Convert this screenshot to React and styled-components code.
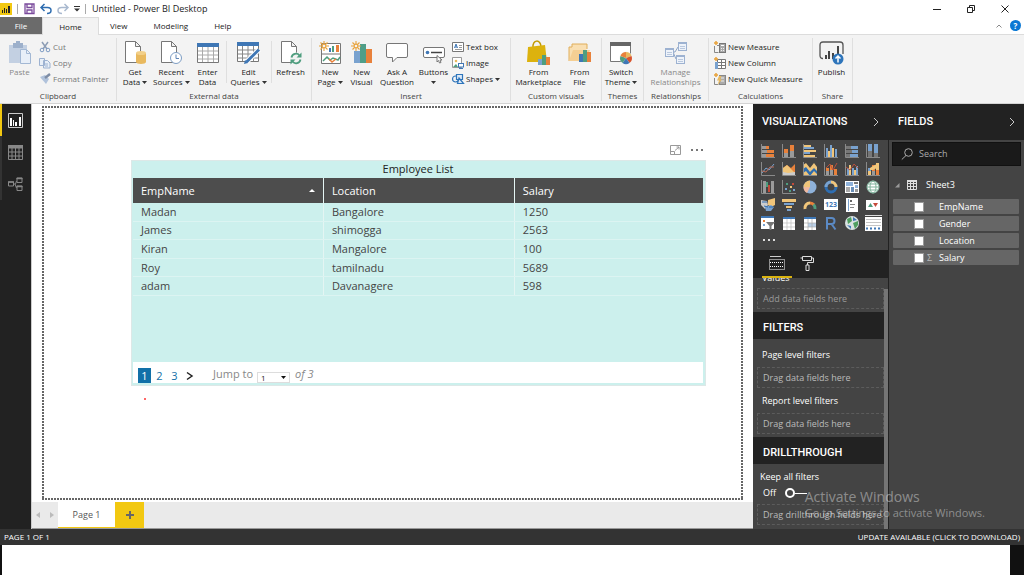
import React, { useState } from "react";
import styled, { createGlobalStyle } from "styled-components";

const GlobalStyle = createGlobalStyle`
  *, *::before, *::after { box-sizing: border-box; }
  body {
    margin: 0;
    background: #fff;
    font-family: "Open Sans", "Noto Sans", sans-serif;
    font-size: 8px;
    line-height: 10px;
    color: #222;
  }
  button, input, select {
    font: inherit;
    color: inherit;
    margin: 0;
    padding: 0;
    border: 0;
    background: none;
  }
`;

// small helper, draws a list of [x, y, w, h, fill]
const Bars = ({ list }) =>
  list.map(([x, y, w, h, fill], i) => (
    <rect key={i} x={x} y={y} width={w} height={h} fill={fill} />
  ));

const Icon = ({ w = 14, h, box, children }) => (
  <Svg width={w} height={h || w} viewBox={box || `0 0 ${w} ${h || w}`} fill="none" aria-hidden="true">
    {children}
  </Svg>
);

const Caret = () => (
  <Icon w={5} h={3}><path d="M0 0h5L2.5 3z" fill="#333" /></Icon>
);

const Spark = () => (
  <g stroke="#e8a33d" strokeWidth="1.1">
    <path d="M5 0v10M0 5h10M1.5 1.5l7 7M8.500 1.500l-7 7" />
    <circle cx="5" cy="5" r="1.900" fill="#f3f3f3" />
  </g>
);

const doc = <path d="M1.500.5h10l5 5v16h-15zM11.500.5v5h5" fill="#fff" stroke="#777" />;

const art = {
  paste: (
    <Icon w={22} h={24}>
      <path d="M0 4h18v18H0z" fill="#c3d0e2" />
      <path d="M4 2h3V0h4v2h3v5H4z" fill="#9db0cb" />
      <path d="M11.500 8.500h6l4 4v10h-10z" fill="#e8eff8" stroke="#a3b8d4" />
      <path d="M17.500 8.500v4h4" stroke="#a3b8d4" />
    </Icon>
  ),
  getData: (
    <Icon w={22} h={24}>
      {doc}
      <path d="M12 12v9c0 2.500 10 2.500 10 0v-9z" fill="#e9b95e" />
      <ellipse cx="17" cy="12" rx="5" ry="2" fill="#f2cf88" />
    </Icon>
  ),
  recent: (
    <Icon w={22} h={24}>
      {doc}
      <circle cx="16" cy="17" r="5.500" fill="#fff" stroke="#7d9dc4" />
      <path d="M16 13.500v4h3" stroke="#5f84b5" />
    </Icon>
  ),
  enter: (
    <Icon w={22} h={22}>
      <path d="M.5 1.500h21v19H.5z" fill="#fff" stroke="#777" />
      <path d="M0 1h22v4H0z" fill="#3f77b5" />
      <path d="M5.500 5v15M11 5v15M16.500 5v15M1 9h20M1 13h20M1 17h20" stroke="#aaa" />
    </Icon>
  ),
  edit: (
    <Icon w={23} h={24}>
      <path d="M.5 1.500h21v19H.5z" fill="#fff" stroke="#777" />
      <path d="M0 1h22v4H0z" fill="#3f77b5" />
      <path d="M5.500 5v15M11 5v15M16.500 5v15M1 9h20M1 13h20M1 17h20" stroke="#888" />
      <path d="M22 8.500L9.500 21" stroke="#fff" strokeWidth="5" />
      <path d="M22 8.500L9.500 21" stroke="#3f77b5" strokeWidth="3" />
      <path d="M8 19l3 3-4 1z" fill="#3f77b5" />
    </Icon>
  ),
  refresh: (
    <Icon w={22} h={24}>
      {doc}
      <circle cx="16" cy="17.500" r="6" fill="#f3f3f3" />
      <path d="M11.500 16.500a4.500 4.500 0 0 1 8-2M20.500 18.500a4.500 4.500 0 0 1-8 2" stroke="#4f9e7f" strokeWidth="1.800" />
      <path d="M21.500 11.500v5h-5zM10.500 23.500v-5h5z" fill="#4f9e7f" />
    </Icon>
  ),
  newPage: (
    <Icon w={23} h={24}>
      <path d="M2.500 2.500h19v20h-19zM2 13h20" fill="#fff" stroke="#777" />
      <Bars list={[[10, 7, 2, 4, "#3f77b5"], [13, 5, 2, 6, "#4f9e7f"], [17, 4, 3, 7, "#e8813b"]]} />
      <path d="M4 20l4-4 3 3 3-2 5 2 2-3" stroke="#4f9e7f" strokeWidth="1.500" />
      <path d="M10 18l3 3 4-3" stroke="#e8813b" strokeWidth="1.500" />
      <Spark />
    </Icon>
  ),
  newVisual: (
    <Icon w={22} h={24}>
      <Bars list={[[3, 10, 6, 12, "#79a2cf"], [9, 3, 6, 19, "#4f9e88"], [15, 8, 6, 14, "#e8813b"]]} />
      <Spark />
    </Icon>
  ),
  ask: (
    <Icon w={22} h={24}>
      <path d="M2 2.500h18q1.500 0 1.500 1.500v11q0 1.500-1.500 1.500h-9L6.500 21v-4.500H2Q.5 16.500.5 15V4Q.5 2.500 2 2.500z" fill="#fff" stroke="#777" />
    </Icon>
  ),
  buttons: (
    <Icon w={22} h={24}>
      <rect x=".5" y="6.500" width="21" height="10" rx="1.500" fill="#fff" stroke="#777" />
      <circle cx="4.500" cy="11.500" r="1.800" fill="#3f77b5" />
      <path d="M8 11.500h11" stroke="#444" strokeWidth="1.500" />
      <path d="M14 14.500l5 4.500h-2l1 2.500-1.500.5-1-2.500-1.500 1.500z" fill="#fff" stroke="#777" />
    </Icon>
  ),
  market: (
    <Icon w={23} h={26}>
      <path d="M6 8C5-1 14-1 14 7" stroke="#c29a00" strokeWidth="1.500" />
      <path d="M1 7l17-2 2 17H0z" fill="#dcb20e" />
      <Bars list={[[11, 19, 4, 6, "#79a2cf"], [15, 15, 4, 10, "#4f9e7f"], [19, 17, 4, 8, "#e8813b"]]} />
    </Icon>
  ),
  file: (
    <Icon w={23} h={24}>
      <path d="M1 20V6h3V3h15v5" fill="#f9dfb2" stroke="#e0ae5b" />
      <path d="M1 20L5 9h17l-4 11z" fill="#f5cf93" />
      <Bars list={[[11, 13, 4, 8, "#3f77b5"], [15, 9, 4, 12, "#4f9e7f"], [19, 11, 4, 10, "#e8813b"]]} />
    </Icon>
  ),
  theme: (
    <Icon w={24} h={24}>
      <path d="M1.500 1.500h20v19h-20z" fill="#fff" stroke="#777" />
      <path d="M1 1h21v4H1z" fill="#666" />
      <circle cx="17" cy="17" r="6.500" fill="#f3f3f3" />
      <path d="M17 17v-6a6 6 0 0 1 5.500 4z" fill="#e9b95e" />
      <path d="M17 17l5.500-2a6 6 0 0 1-2 7z" fill="#d9532c" />
      <path d="M17 17l3.500 5a6 6 0 0 1-7 0z" fill="#3f77b5" />
      <path d="M17 17l-3.500 5a6 6 0 0 1-2-7z" fill="#4f9e7f" />
      <path d="M17 17l-5.500-2a6 6 0 0 1 5.500-4z" fill="#e8813b" />
    </Icon>
  ),
  manage: (
    <Icon w={23} h={24}>
      <path d="M8 11h3l3-5M9 11l3 7" stroke="#8ea6c8" />
      {[[14, 1], [1, 7], [12, 14]].map(([x, y]) => (
        <g key={x} transform={`translate(${x} ${y})`}>
          <rect x=".5" y=".5" width="8" height="8" fill="#eef3fa" stroke="#9db2d1" />
          <path d="M0 1h9" stroke="#9db2d1" strokeWidth="2" />
          <path d="M2 4.500h5M2 6.500h5" stroke="#b9c8de" />
        </g>
      ))}
    </Icon>
  ),
  publish: (
    <Icon w={25} h={24}>
      <path d="M4 17.500q-3 0-3-3V4q0-3 3-3h17q3 0 3 3v9" stroke="#555" strokeWidth="1.300" />
      <Bars list={[[6, 14, 2, 4, "#444"], [9, 10, 2, 8, "#444"], [13, 12, 2, 6, "#444"], [18, 5, 2, 9, "#444"]]} />
      <circle cx="19" cy="18" r="5.500" fill="#2e75bb" />
      <path d="M19 21.500v-6M16.500 17.500l2.500-2.500 2.500 2.500" stroke="#fff" strokeWidth="1.500" />
    </Icon>
  ),
};

const small = {
  cut: (
    <Icon w={12}>
      <path d="M3 1l5 7M9 1L4 8" stroke="#8d9db5" strokeWidth="1.500" />
      <circle cx="3" cy="9" r="1.800" stroke="#7f9cc4" /><circle cx="9" cy="9" r="1.800" stroke="#7f9cc4" />
    </Icon>
  ),
  copy: (
    <Icon w={12}>
      <path d="M.5 1.500h5v7h-5zM4.500 3.500h4l2.500 2.500v5H4.500z" fill="#e8eff8" stroke="#9db2d1" />
      <path d="M6 7h3M6 9h3" stroke="#9db2d1" />
    </Icon>
  ),
  painter: (
    <Icon w={12}>
      <path d="M1 4l5-2 4 4-3 5z" fill="#b0c2db" /><path d="M6 5l5-4" stroke="#7d8ca5" strokeWidth="2.500" />
    </Icon>
  ),
  textBox: (
    <Icon w={12} h={10}>
      <path d="M.5.5h11v9H.5z" fill="#fff" stroke="#777" />
      <path d="M2.500 6l1.500-4 1.500 4M3 5h2" stroke="#3f77b5" /><path d="M7 3.500h3M7 5.500h3M3 7.500h7" stroke="#999" />
    </Icon>
  ),
  image: (
    <Icon w={12}>
      <path d="M.5.5h9v10h-9z" fill="#fff" stroke="#999" />
      <circle cx="4" cy="4" r="1.300" fill="#e9b95e" /><path d="M1 10l3-3 2 3z" fill="#4f9e7f" />
      <rect x="6.500" y="6.500" width="5" height="3.500" fill="#fff" stroke="#3f77b5" /><path d="M7 11.500h4" stroke="#3f77b5" />
    </Icon>
  ),
  shapes: (
    <Icon w={12}>
      <circle cx="3.500" cy="6" r="3" stroke="#2e75bb" strokeWidth="1.200" />
      <path d="M4.500 1.500h6v5h-6zM7 5l4.500 5.500h-6z" fill="#dce9f7" stroke="#2e75bb" strokeWidth="1.200" />
    </Icon>
  ),
  measure: (
    <Icon w={13} h={12}>
      <path d="M1.500 5v6.500h4M4 4.500h2" stroke="#888" />
      <path d="M3 0v4M1 2h4" stroke="#e8a33d" strokeWidth="1.500" />
      <rect x="6.500" y="2.500" width="6" height="9" fill="#aaa" stroke="#777" /><path d="M8 4.500h3" stroke="#fff" /><path d="M8 7.500h3M8 9.500h3" stroke="#eee" strokeDasharray="1 1" />
    </Icon>
  ),
  column: (
    <Icon w={13} h={12}>
      <path d="M4.500 2.500h8v9h-8zM4 5.500h9M4 8.500h9M8.500 3v8" fill="#fff" stroke="#777" />
      <rect x="2" y="5" width="3" height="7" fill="#79a2cf" />
      <path d="M3 0v4M1 2h4" stroke="#e8a33d" strokeWidth="1.500" />
    </Icon>
  ),
  quick: (
    <Icon w={13} h={12}>
      <path d="M1.500 5v6.500h4" stroke="#888" />
      <path d="M3 0v4M1 2h4" stroke="#e8a33d" strokeWidth="1.500" />
      <rect x="6.500" y="2.500" width="6" height="9" fill="#aaa" stroke="#888" /><path d="M8 5h3M8 8h3" stroke="#eee" />
      <path d="M6 3L4 7.500h2L4.500 12 9 6.500H7L8.500 3z" fill="#e9b95e" />
    </Icon>
  ),
};

const O = "#e8813b";
const B = "#79a2cf";
const Y = "#f0c57a";
const G = "#9a9a9a";
const axis = <path d="M.5 0v13.500H14" stroke="#8a8a8a" />;

const visuals = [
  ["Stacked bar chart", <>{axis}<Bars list={[[1, 2, 4, 3, G], [5, 2, 3, 3, O], [1, 6, 5, 3, G], [6, 6, 7, 3, O], [1, 10, 4, 3, G], [5, 10, 8, 3, O]]} /></>],
  ["Stacked column chart", <>{axis}<Bars list={[[2, 5, 4, 4, O], [2, 9, 4, 4, G], [8, 1, 4, 6, O], [8, 7, 4, 6, G]]} /></>],
  ["Clustered bar chart", <>{axis}<Bars list={[[1, 1, 7, 2, Y], [1, 3, 10, 2, B], [1, 6, 12, 2, Y], [1, 8, 6, 2, B], [1, 11, 11, 2, Y]]} /></>],
  ["Clustered column chart", <>{axis}<Bars list={[[2, 4, 2, 9, B], [4, 7, 2, 6, Y], [6, 1, 2, 12, B], [8, 4, 2, 9, Y], [11, 5, 2, 8, B]]} /></>],
  ["100% stacked bar chart", <>{axis}<Bars list={[[1, 2, 5, 3, "#777"], [6, 2, 7, 3, B], [1, 6, 6, 3, "#777"], [7, 6, 6, 3, B], [1, 10, 4, 3, "#777"], [5, 10, 8, 3, B]]} /></>],
  ["100% stacked column chart", <>{axis}<Bars list={[[2, 0, 4, 7, B], [2, 7, 4, 6, "#777"], [8, 0, 4, 9, B], [8, 9, 4, 4, "#777"]]} /></>],
  ["Line chart", <>{axis}<path d="M1 11l4-5 3 2 5-6" stroke={B} /><path d="M1 9l4 1 4-5 4 0" stroke="#b86e5c" /></>],
  ["Area chart", <><path d="M1 13V6l4-3 4 3 4-4v11z" fill={O} /><path d="M1 13V6l4-3 8 8v2z" fill={Y} /><path d="M1 13V10l5 1 7-1v3z" fill="#ccc" />{axis}</>],
  ["Stacked area chart", <><path d="M0 13V3l3-2 4 5 4-5 3 4v8z" fill={Y} /><path d="M0 11V7l3-2 4 5 4-4 3 3v3l-3-3-4 5-4-5z" fill="#2e6db0" />{axis}</>],
  ["Line and stacked column chart", <>{axis}<Bars list={[[2, 6, 3, 3, O], [2, 9, 3, 4, G], [6, 3, 3, 5, O], [6, 8, 3, 5, G], [10, 7, 3, 6, O]]} /><path d="M2 6l4-4 3 6 4-7" stroke="#b8503c" /></>],
  ["Line and clustered column chart", <>{axis}<Bars list={[[2, 6, 2, 7, B], [4, 3, 2, 10, Y], [7, 6, 2, 7, B], [9, 8, 2, 5, Y], [11, 4, 2, 9, B]]} /><path d="M1 5l4 3 4-6 4 4" stroke="#b8503c" /></>],
  ["Ribbon chart", <>{axis}<Bars list={[[2, 6, 3, 3, B], [2, 9, 3, 4, Y], [6, 3, 3, 6, O], [6, 9, 3, 4, G], [10, 1, 3, 7, Y], [10, 8, 3, 5, O]]} /><path d="M4 6l3-2 4-2v4L7 8 4 8z" fill={Y} /></>],
  ["Waterfall chart", <>{axis}<Bars list={[[2, 1, 3, 12, G], [5, 2, 2, 5, "#4f9e7f"], [7, 5, 2, 7, "#c44b3a"], [10, 1, 3, 12, G]]} /></>],
  ["Scatter chart", <>{axis}<Bars list={[[3, 8, 2, 2, B], [4, 3, 2, 2, "#4f9e7f"], [8, 6, 2, 2, Y], [10, 3, 2, 2, "#c44b3a"], [11, 9, 2, 2, B], [7, 10, 2, 2, "#4f9e7f"]]} /></>],
  ["Pie chart", <><circle cx="7" cy="7" r="6.500" fill="#8fb2da" /><path d="M7 7L4 13A6.500 6.500 0 0 1 .5 7z" fill="#f0b9a0" /><path d="M7 7H.5A6.500 6.500 0 0 1 7 .5z" fill={Y} /></>],
  ["Donut chart", <><circle cx="7" cy="7" r="5" stroke="#2e6db0" strokeWidth="3" /><path d="M7 2a5 5 0 0 1 5 5" stroke={Y} strokeWidth="3" /><path d="M2 7a5 5 0 0 1 5-5" stroke={B} strokeWidth="3" /></>],
  ["Treemap", <Bars list={[[0, 1, 14, 12, "#fff"], [1, 2, 7, 4, "#8fb2da"], [9, 2, 4, 2, "#777"], [1, 7, 4, 5, "#aaa"], [6, 7, 3, 5, "#6a8fb8"], [10, 5, 3, 3, "#8fb2da"], [10, 9, 3, 3, "#999"]]} />],
  ["Map", <><circle cx="7" cy="7" r="6" fill="#fff" stroke="#8bbda8" /><ellipse cx="7" cy="7" rx="3" ry="6" stroke="#7fb39b" /><path d="M1 7h12M2 4h10M2 10h10" stroke="#7fb39b" /></>],
  ["Filled map", <><path d="M0 2l6 1 1 4-3 4-4-4z" fill="#ccc" /><path d="M7 2l7-2v7l-4 2-3-2z" fill={Y} /><path d="M4 9l6-2 3 2-3 4H5z" fill={B} /><path d="M1 4h5M8 9h4M3 8l4 1" stroke="#2e6db0" /></>],
  ["Funnel", <Bars list={[[0, 1, 14, 3, Y], [2, 5, 10, 2, B], [4, 8, 6, 2, Y], [5, 11, 4, 2, B]]} />],
  ["Gauge", <><path d="M2 11a5 5 0 0 1 5-6" stroke={Y} strokeWidth="3" /><path d="M7 5a5 5 0 0 1 4 2" stroke={O} strokeWidth="3" /><path d="M10.500 6.500a5 5 0 0 1 1.500 4.500" stroke="#4f9e7f" strokeWidth="3" /></>],
  ["Card", <><Bars list={[[0, 1, 14, 11, "#fff"]]} /><text x="7" y="9" textAnchor="middle" fontSize="7" fontWeight="700" fill="#3f77b5">123</text></>],
  ["Multi-row card", <><Bars list={[[1, 0, 12, 14, "#fff"], [3, 1, 1, 12, B], [5, 2, 2, 2, "#666"], [5, 6, 5, 1, "#888"], [5, 9, 4, 1, "#888"]]} /></>],
  ["KPI", <><Bars list={[[0, 2, 14, 10, "#fff"]]} /><path d="M2 9l2.500-4L7 9z" fill="#4f9e7f" /><path d="M7 5h5L9.500 9z" fill="#c44b3a" /></>],
  ["Slicer", <><Bars list={[[0, 0, 13, 13, "#fff"], [0, 0, 13, 2, "#3f77b5"], [2, 4, 2, 2, O], [2, 8, 2, 2, B]]} /><path d="M5 6h9l-3.500 4v4h-2v-4z" fill="#777" /></>],
  ["Table", <><Bars list={[[1, 1, 12, 13, "#fff"], [1, 1, 12, 2, "#3f77b5"]]} /><path d="M5 3v11M9 3v11M1 7h12M1 11h12" stroke="#bbb" strokeWidth=".7" /></>],
  ["Matrix", <><Bars list={[[1, 1, 12, 13, "#fff"], [1, 1, 12, 2, "#3f77b5"], [5, 7, 8, 4, "#b8cfe8"]]} /><path d="M5 3v11M9 3v11M1 7h12M1 11h12" stroke="#aaa" strokeWidth=".7" /></>],
  ["R script visual", <path d="M3 13.500V2h4.500a3 3 0 0 1 0 6H3M7.500 8l4 5.500" stroke="#5b8ac5" strokeWidth="2" />],
  ["ArcGIS map", <><circle cx="7" cy="7" r="7" fill="#d9e2e2" /><path d="M2 3l4-2 1 4-4 3zM8 7l5-2v4l-3 4z" fill="#4f9e5f" /><path d="M2 9l4 1v3zM8 1l4 3-4 1z" fill="#3f77b5" /></>],
  ["Custom table", <><Bars list={[[-1, 1, 17, 14, "#fff"], [-1, -1, 17, 1, "#ddd"]]} /><path d="M0 3.500h15M0 6.500h15M0 9.500h15" stroke="#aaa" strokeWidth=".7" /><path d="M0 12.500h15" stroke="#3f77b5" strokeWidth="2" strokeDasharray="2 2" /></>],
];

const ribbon = [
  {
    name: "Clipboard", size: 117, pad: 2,
    items: [
      { art: "paste", lines: ["Paste"], w: 35, off: true },
      { list: [["cut", "Cut"], ["copy", "Copy"], ["painter", "Format Painter"]], off: true },
    ],
  },
  {
    name: "External data", size: 195, pad: 0,
    items: [
      { art: "getData", lines: ["Get", "Data"], caret: true, w: 36 },
      { art: "recent", lines: ["Recent", "Sources"], caret: true, w: 35 },
      { art: "enter", lines: ["Enter", "Data"], w: 36 },
      { line: true },
      { art: "edit", lines: ["Edit", "Queries"], caret: true, w: 44 },
      { line: true },
      { art: "refresh", lines: ["Refresh"], w: 38 },
    ],
  },
  {
    name: "Insert", size: 199, pad: 2,
    items: [
      { art: "newPage", lines: ["New", "Page"], caret: true, w: 32 },
      { art: "newVisual", lines: ["New", "Visual"], w: 31 },
      { art: "ask", lines: ["Ask A", "Question"], w: 40 },
      { art: "buttons", lines: ["Buttons", ""], caret: true, w: 33 },
      { list: [["textBox", "Text box"], ["image", "Image"], ["shapes", "Shapes", true]] },
    ],
  },
  {
    name: "Custom visuals", size: 91, pad: 2,
    items: [
      { art: "market", lines: ["From", "Marketplace"], w: 51 },
      { art: "file", lines: ["From", "File"], w: 31 },
    ],
  },
  { name: "Themes", size: 42, pad: 1, items: [{ art: "theme", lines: ["Switch", "Theme"], caret: true, w: 36 }] },
  { name: "Relationships", size: 65, pad: 2, items: [{ art: "manage", lines: ["Manage", "Relationships"], w: 59, off: true }] },
  {
    name: "Calculations", size: 104, pad: 2,
    items: [{ list: [["measure", "New Measure"], ["column", "New Column"], ["quick", "New Quick Measure"]] }],
  },
  { name: "Share", size: 40, pad: 1, items: [{ art: "publish", lines: ["Publish"], w: 35 }] },
];

const employees = [
  ["Madan", "Bangalore", "1250"],
  ["James", "shimogga", "2563"],
  ["Kiran", "Mangalore", "100"],
  ["Roy", "tamilnadu", "5689"],
  ["adam", "Davanagere", "598"],
];

const Ribbon = () => (
  <RibbonBar>
    {ribbon.map((group) => (
      <Group key={group.name} $size={group.size}>
        <GroupItems $pad={group.pad}>
          {group.items.map((item, i) => {
            if (item.line) return <ThinLine key={i} />;
            if (item.list) {
              return (
                <SmallList key={i}>
                  {item.list.map(([icon, text, caret]) => (
                    <SmallButton key={text} $off={item.off}>
                      {small[icon]}
                      <span>{text}</span>
                      {caret && <Caret />}
                    </SmallButton>
                  ))}
                </SmallList>
              );
            }
            return (
              <BigButton key={i} $w={item.w} $off={item.off}>
                <Picture>{art[item.art]}</Picture>
                {item.lines.map((text, n) => (
                  <Line key={n}>
                    {text}
                    {item.caret && n === item.lines.length - 1 && <Caret />}
                  </Line>
                ))}
              </BigButton>
            );
          })}
        </GroupItems>
        <GroupName>{group.name}</GroupName>
      </Group>
    ))}
  </RibbonBar>
);

const EmployeeTable = () => (
  <Visual>
    <VisualTitle>Employee List</VisualTitle>
    <Table>
      <colgroup>
        <col width="33.4%" /><col width="33.5%" /><col />
      </colgroup>
      <thead>
        <tr>
          <th><SortHead>EmpName <Icon w={6} h={3}><path d="M0 3h6L3 0z" fill="#fff" /></Icon></SortHead></th>
          <th>Location</th>
          <th>Salary</th>
        </tr>
      </thead>
      <tbody>
        {employees.map((row) => (
          <tr key={row[0]}>{row.map((cell) => <td key={cell}>{cell}</td>)}</tr>
        ))}
      </tbody>
    </Table>
    <Pager>
      <PageButton $on>1</PageButton>
      <PageButton>2</PageButton>
      <PageButton>3</PageButton>
      <PageButton aria-label="Next page">
        <Icon w={7} h={8}><path d="M1 .5L6 4 1 7.500" stroke="#222" strokeWidth="1.500" /></Icon>
      </PageButton>
      <JumpLabel htmlFor="jump">Jump to</JumpLabel>
      <JumpBox>
        <JumpSelect id="jump" defaultValue="1">
          <option>1</option><option>2</option><option>3</option>
        </JumpSelect>
        <Icon w={5} h={3}><path d="M0 0h5L2.500 3z" fill="#111" /></Icon>
      </JumpBox>
      <Total>of 3</Total>
    </Pager>
  </Visual>
);

const Chevron = () => (
  <Icon w={6} h={10}><path d="M1 1l4 4-4 4" stroke="#ccc" /></Icon>
);

const Visualizations = () => {
  const [keep, setKeep] = useState(false);
  return (
    <VizPane>
      <PaneHead><PaneTitle>VISUALIZATIONS</PaneTitle><PlainButton aria-label="Collapse visualizations"><Chevron /></PlainButton></PaneHead>
      <VizGrid>
        {visuals.map(([name, drawing]) => (
          <PlainButton key={name} aria-label={name}><Icon>{drawing}</Icon></PlainButton>
        ))}
        <PlainButton aria-label="More visuals">
          <Icon><Bars list={[[2, 5, 2, 2, "#ddd"], [7, 5, 2, 2, "#ddd"], [12, 5, 2, 2, "#ddd"]]} /></Icon>
        </PlainButton>
      </VizGrid>
      <VizTabs>
        <VizTab $on aria-label="Fields">
          <Icon w={16}>
            <path d="M1 1.500h11" stroke="#ccc" />
            <path d="M.5 4.500h15v10H.5zM1 7.500h14M1 11.500h14" stroke="#fff" strokeDasharray="1 1" />
          </Icon>
        </VizTab>
        <VizTab aria-label="Format">
          <Icon w={14} h={16}>
            <path d="M2.500 1.500h9v4h-9zM2.500 3H.5M11.500 3h2v4.500h-6V10M6 10h3v5.500H6z" stroke="#ddd" />
          </Icon>
        </VizTab>
      </VizTabs>
      <Wells>
        <WellArea>
          <ValuesName>Values</ValuesName>
          <Well>Add data fields here</Well>
          <Section>FILTERS</Section>
          <WellName>Page level filters</WellName>
          <Well $bright>Drag data fields here</Well>
          <WellName>Report level filters</WellName>
          <Well $bright>Drag data fields here</Well>
          <Section>DRILLTHROUGH</Section>
          <KeepName htmlFor="keep">Keep all filters</KeepName>
          <KeepRow>
            {keep ? "On" : "Off"}
            <Switch id="keep" type="checkbox" checked={keep} onChange={() => setKeep(!keep)} />
          </KeepRow>
          <Well $bright>Drag drillthrough fields here</Well>
        </WellArea>
        <ScrollThumb />
      </Wells>
    </VizPane>
  );
};

const Fields = () => (
  <FieldPane>
    <PaneHead><PaneTitle>FIELDS</PaneTitle><PlainButton aria-label="Collapse fields"><Chevron /></PlainButton></PaneHead>
    <SearchBox>
      <Icon w={12}><circle cx="7.500" cy="4.500" r="3.800" stroke="#aaa" /><path d="M5 7.500L.8 11.500" stroke="#aaa" /></Icon>
      <SearchInput type="text" placeholder="Search" aria-label="Search" />
    </SearchBox>
    <Sheet>
      <Icon w={5}><path d="M4.500 0v4.500H0z" fill="#999" /></Icon>
      <Icon w={10}>
        <path d="M.5.5h9v9h-9zM.5 3.500h9M.5 6.500h9M3.500 1v8M6.500 1v8" stroke="#ddd" /><path d="M0 0h10v2H0z" fill="#ddd" />
      </Icon>
      Sheet3
    </Sheet>
    <FieldList>
      {["EmpName", "Gender", "Location", "Salary"].map((name) => (
        <FieldRow key={name}>
          <Tick type="checkbox" />
          <Sigma>{name === "Salary" ? "Σ" : ""}</Sigma>
          {name}
        </FieldRow>
      ))}
    </FieldList>
  </FieldPane>
);

export default function App() {
  return (
    <Shell>
      <GlobalStyle />
      <TitleBar>
        <Icon w={12}>
          <rect width="12" height="12" fill="#f2c811" />
          <Bars list={[[2, 7, 1, 3, "#222"], [4, 5, 1, 5, "#222"], [6, 6, 1, 4, "#222"], [8, 3, 2, 7, "#222"]]} />
        </Icon>
        <Divider />
        <PlainButton aria-label="Save">
          <Icon w={11}><path d="M1 1h9v9.500H1zM3 1v3.500h5V1M3 10V7h5v3" stroke="#7a4a9c" strokeWidth="1.300" /></Icon>
        </PlainButton>
        <PlainButton aria-label="Undo">
          <Icon w={12}><path d="M4.500 1L1 4.500 4.500 8M1.500 4.500h6q3.500 0 3.500 3t-4 3" stroke="#2e6db0" strokeWidth="1.500" /></Icon>
        </PlainButton>
        <PlainButton aria-label="Redo">
          <Icon w={12}><path d="M7.500 1L11 4.500 7.500 8M10.500 4.500h-6Q1 4.500 1 7.500t4 3" stroke="#a9b9cf" strokeWidth="1.500" /></Icon>
        </PlainButton>
        <PlainButton aria-label="Customize">
          <Icon w={6} h={6}><path d="M0 .5h6" stroke="#333" /><path d="M0 2.500h6L3 5.500z" fill="#333" /></Icon>
        </PlainButton>
        <Divider />
        <AppName>Untitled - Power BI Desktop</AppName>
        <WindowButtons>
          <PlainButton aria-label="Minimize"><Icon w={8}><path d="M0 4.500h8" stroke="#222" /></Icon></PlainButton>
          <PlainButton aria-label="Restore"><Icon w={8}><path d="M.5 2.500h5v5h-5zM2.500 2V.5h5v5H6" stroke="#222" /></Icon></PlainButton>
          <PlainButton aria-label="Close"><Icon w={8}><path d="M.5.5l7 7M7.500.5l-7 7" stroke="#222" /></Icon></PlainButton>
        </WindowButtons>
      </TitleBar>
      <Tabs>
        <FileTab>File</FileTab>
        <HomeTab>Home</HomeTab>
        <Tab>View</Tab>
        <Tab>Modeling</Tab>
        <Tab>Help</Tab>
        <TabTools>
          <PlainButton aria-label="Collapse ribbon"><Icon w={6} h={4}><path d="M.5 3.500L3 1l2.500 2.500" stroke="#888" /></Icon></PlainButton>
          <HelpButton aria-label="Help">?</HelpButton>
        </TabTools>
      </Tabs>
      <Ribbon />
      <Main>
        <Rail>
          <RailButton $on aria-label="Report">
            <Icon w={15}><path d="M.5.5h14v14H.5z" stroke="#ccc" /><Bars list={[[2, 5, 2, 8, "#fff"], [5, 7, 1, 6, "#fff"], [7, 9, 2, 4, "#fff"], [11, 4, 2, 9, "#fff"]]} /></Icon>
          </RailButton>
          <RailButton aria-label="Data">
            <Icon w={15}><path d="M.5.5h14v14H.5zM.5 7h14M.5 11h14M4 3v12M7.500 3v12M11 3v12" stroke="#888" /><path d="M0 0h15v3.500H0z" fill="#888" /></Icon>
          </RailButton>
          <RailButton aria-label="Relationships">
            <Icon w={15}><path d="M.5 5h5v4h-5zM9 1h5v4.500H9zM9 9h5v4.500H9zM6 7h1.500l1-3M7 7l1.500 4" stroke="#888" /><path d="M0 5h6M8.500 1.500h6M8.500 9.500h6" stroke="#888" strokeWidth="1.500" /></Icon>
          </RailButton>
        </Rail>
        <Workspace>
          <Page>
            <VisualTools>
              <PlainButton aria-label="Focus mode">
                <Icon w={11} h={10}><path d="M.5.5h10v9H.5zM.5 6.500h4v3M5 5.500L9 2M6.500 2H9v2.500" stroke="#999" /></Icon>
              </PlainButton>
              <PlainButton aria-label="More options">
                <Icon w={12} h={2}><Bars list={[[0, 0, 2, 2, "#777"], [5, 0, 2, 2, "#777"], [10, 0, 2, 2, "#777"]]} /></Icon>
              </PlainButton>
            </VisualTools>
            <EmployeeTable />
            <RedDot />
          </Page>
          <PageTabs>
            <PageArrows>
              <PlainButton aria-label="Previous page tab"><Icon w={4} h={6}><path d="M4 0v6L0 3z" fill="#bbb" /></Icon></PlainButton>
              <PlainButton aria-label="Next page tab"><Icon w={4} h={6}><path d="M0 0v6l4-3z" fill="#bbb" /></Icon></PlainButton>
            </PageArrows>
            <PageTab>Page 1</PageTab>
            <AddPage aria-label="Add page"><Icon w={8}><path d="M4 0v8M0 4h8" stroke="#666" strokeWidth="2" /></Icon></AddPage>
          </PageTabs>
        </Workspace>
        <Visualizations />
        <Fields />
        <Watermark>
          <WatermarkTitle>Activate Windows</WatermarkTitle>
          Go to Settings to activate Windows.
        </Watermark>
      </Main>
      <StatusBar>
        <span>PAGE 1 OF 1</span>
        <UpdateLink href="#update">UPDATE AVAILABLE (CLICK TO DOWNLOAD)</UpdateLink>
      </StatusBar>
      <Desktop />
    </Shell>
  );
}

const Svg = styled.svg`
  display: block;
  flex: none;
  overflow: visible;
`;

const Shell = styled.div`
  display: flex;
  flex-direction: column;
  min-height: 100vh;
`;

const PlainButton = styled.button`
  display: flex;
  align-items: center;
  justify-content: center;
`;

const TitleBar = styled.header`
  display: flex;
  align-items: center;
  gap: 5px;
  height: 17px;
`;

const Divider = styled.span`
  width: 1px;
  height: 10px;
  background: #aaa;
  margin: 0 1px 0 0;
`;

const AppName = styled.span`
  font-size: 9px;
  color: #222;
`;

const WindowButtons = styled.div`
  display: flex;
  gap: 26px;
  margin-left: auto;
  padding-right: 15px;
`;

const Tabs = styled.nav`
  display: flex;
  height: 18px;
  border-bottom: 1px solid #dcdcdc;
`;

const Tab = styled.button`
  padding: 0 11px;
  margin-right: 4px;
`;

const FileTab = styled(Tab)`
  width: 42px;
  margin: 0;
  background: #6b6b6b;
  color: #fff;
`;

const HomeTab = styled(Tab)`
  width: 57px;
  margin: 0 0 -1px;
  background: #f3f3f3;
  border: 1px solid #dcdcdc;
  border-bottom: 0;
`;

const TabTools = styled.div`
  display: flex;
  align-items: center;
  gap: 8px;
  margin-left: auto;
  padding-right: 3px;
`;

const HelpButton = styled.button`
  width: 11px;
  height: 11px;
  border-radius: 50%;
  background: #0a78d4;
  color: #fff;
  font-weight: 700;
  text-align: center;
`;

const RibbonBar = styled.section`
  display: flex;
  height: 69px;
  padding: 3px 0 2px;
  background: #f3f3f3;
  border-bottom: 1px solid #d4d4d4;
`;

const Group = styled.div`
  display: flex;
  flex-direction: column;
  flex: 0 0 ${(p) => p.$size}px;
  border-right: 1px solid #dfdfdf;
`;

const GroupItems = styled.div`
  display: flex;
  flex: 1;
  padding-left: ${(p) => p.$pad}px;
`;

const GroupName = styled.div`
  text-align: center;
  color: #444;
`;

const BigButton = styled.button`
  display: flex;
  flex-direction: column;
  align-items: center;
  flex: 0 0 ${(p) => p.$w}px;
  white-space: nowrap;
  color: ${(p) => (p.$off ? "#888" : "#222")};
`;

const Picture = styled.span`
  display: flex;
  align-items: center;
  height: 29px;
`;

const Line = styled.span`
  display: flex;
  align-items: center;
  gap: 2px;
  height: 10px;
`;

const ThinLine = styled.span`
  width: 1px;
  height: 42px;
  margin-top: 3px;
  background: #dfdfdf;
`;

const SmallList = styled.div`
  display: flex;
  flex-direction: column;
  padding: 1px 0 0 2px;
`;

const SmallButton = styled.button`
  display: flex;
  align-items: center;
  gap: 2px;
  height: 16px;
  white-space: nowrap;
  color: ${(p) => (p.$off ? "#777" : "#222")};
`;

const Main = styled.main`
  position: relative;
  display: flex;
  flex: 1;
`;

const Rail = styled.nav`
  flex: 0 0 32px;
  background: #222;
  border-right: 1px solid #ccc;
`;

const RailButton = styled(PlainButton)`
  width: 100%;
  height: 32px;
  padding-right: 2px;
  border-left: 2px solid ${(p) => (p.$on ? "#f2c811" : "#333")};
`;

const Workspace = styled.div`
  display: flex;
  flex-direction: column;
  flex: 1;
  min-width: 0;
`;

const dots = (dir) => `repeating-linear-gradient(${dir}, #666 0 2px, #fff 2px 3px)`;

const Page = styled.div`
  flex: 1;
  margin: 2px 10px;
  padding: 36px 37px 0 89px;
  background:
    ${dots("to right")} top / 100% 2px no-repeat,
    ${dots("to right")} bottom / 100% 2px no-repeat,
    ${dots("to bottom")} left / 2px 100% no-repeat,
    ${dots("to bottom")} right / 2px 100% no-repeat;
`;

const VisualTools = styled.div`
  display: flex;
  align-items: center;
  justify-content: flex-end;
  gap: 10px;
  height: 18px;
  padding: 0 3px 2px 0;
`;

const Visual = styled.section`
  padding: 0 2px 2px 1px;
  border: 1px solid #dde8e7;
  background: #ccf0ed;
`;

const VisualTitle = styled.h1`
  margin: 0;
  padding-bottom: 2px;
  font-size: 11px;
  font-weight: 400;
  line-height: 15px;
  text-align: center;
  color: #222;
`;

const Table = styled.table`
  width: 100%;
  height: 118px;
  table-layout: fixed;
  border-collapse: collapse;
  font-size: 11px;
  line-height: 16px;
  text-align: left;
  color: #444;
  th {
    height: 25px;
    padding: 0 8px;
    background: #4d4d4d;
    color: #fff;
    font-weight: 400;
  }
  td {
    padding: 0 8px;
    border-bottom: 1px solid #dcf4f2;
  }
  th + th, td + td {
    border-left: 1px solid #e4f5f3;
  }
`;

const SortHead = styled.span`
  display: flex;
  align-items: center;
  justify-content: space-between;
`;

const Pager = styled.div`
  display: flex;
  align-items: flex-end;
  height: 21px;
  margin-top: 66px;
  padding-left: 5px;
  background: #fff;
  font-size: 11px;
  line-height: 15px;
  color: #888;
`;

const PageButton = styled(PlainButton)`
  width: 13px;
  height: 15px;
  margin-right: 2px;
  background: ${(p) => (p.$on ? "#1170a8" : "none")};
  color: ${(p) => (p.$on ? "#fff" : "#1170a8")};
`;

const JumpLabel = styled.label`
  margin: 0 4px 2px 15px;
`;

const JumpBox = styled.span`
  display: flex;
  align-items: center;
  width: 33px;
  height: 11px;
  padding: 0 3px;
  border: 1px solid #ddd;
`;

const JumpSelect = styled.select`
  appearance: none;
  flex: 1;
  min-width: 0;
  font-size: 8px;
  line-height: 9px;
  color: #222;
`;

const Total = styled.em`
  margin: 0 0 2px 5px;
`;

const RedDot = styled.i`
  display: block;
  width: 2px;
  height: 2px;
  margin: 12px 13px;
  background: #f66;
`;

const PageTabs = styled.div`
  display: flex;
  height: 27px;
  background: #eaeaea;
  border-bottom: 1px solid #999;
`;

const PageArrows = styled.div`
  display: flex;
  align-items: center;
  justify-content: space-between;
  width: 26px;
  padding: 0 4px;
`;

const PageTab = styled.button`
  width: 57px;
  background: #fff;
  border-bottom: 1px solid #f2c811;
  font-size: 9px;
  color: #555;
`;

const AddPage = styled(PlainButton)`
  width: 29px;
  background: #f2c811;
`;

const VizPane = styled.aside`
  display: flex;
  flex-direction: column;
  flex: 0 0 136px;
  min-width: 0;
  background: #444;
  border-right: 1px solid #222;
`;

const FieldPane = styled.aside`
  flex: 0 0 135px;
  min-width: 0;
  background: #444;
  color: #fff;
`;

const PaneHead = styled.div`
  display: flex;
  align-items: center;
  justify-content: space-between;
  height: 36px;
  padding: 0 9px;
  background: #222;
`;

const PaneTitle = styled.h2`
  margin: 0;
  font: 500 11px/14px Roboto, sans-serif;
  color: #fff;
`;

const VizGrid = styled.div`
  display: grid;
  grid-template-columns: repeat(6, 21px);
  grid-auto-rows: 18px;
  height: 110px;
  padding: 2px 0 0 4px;
`;

const VizTabs = styled.div`
  display: flex;
  height: 28px;
  padding-left: 9px;
  background: #222;
`;

const VizTab = styled(PlainButton)`
  width: 30px;
  border-bottom: 2px solid ${(p) => (p.$on ? "#d9b310" : "transparent")};
`;

const Wells = styled.div`
  display: flex;
  flex: 1;
  overflow: hidden;
  font-size: 9px;
  color: #fff;
`;

const WellArea = styled.div`
  flex: 1;
  min-width: 0;
`;

const WellName = styled.div`
  padding: 5px 9px 7px;
`;

const ValuesName = styled(WellName)`
  margin-top: -5px;
  padding: 0 9px 5px;
`;

const Well = styled.div`
  height: 21px;
  margin: 0 0 3px 4px;
  padding: 0 5px;
  border: 1px dashed #5c5c5c;
  line-height: 19px;
  white-space: nowrap;
  color: ${(p) => (p.$bright ? "#bbb" : "#999")};
`;

const Section = styled.h2`
  height: 27px;
  margin: 0 0 6px;
  padding: 0 10px;
  background: #222;
  font: 500 11px/31px Roboto, sans-serif;
`;

const KeepName = styled.label`
  display: block;
  padding: 2px 7px 6px;
`;

const KeepRow = styled.div`
  display: flex;
  align-items: center;
  gap: 9px;
  height: 10px;
  margin-bottom: 6px;
  padding-left: 10px;
`;

const Switch = styled.input`
  appearance: none;
  display: flex;
  align-items: center;
  width: 22px;
  height: 10px;
  &::before {
    content: "";
    width: 10px;
    height: 10px;
    border: 2px solid #fff;
    border-radius: 50%;
  }
  &::after {
    content: "";
    flex: 1;
    height: 1px;
    background: #fff;
  }
`;

const ScrollThumb = styled.div`
  flex: 0 0 4px;
  margin-top: 11px;
  background: #757575;
`;

const SearchBox = styled.div`
  display: flex;
  align-items: center;
  gap: 6px;
  height: 24px;
  margin: 2px 3px 0;
  padding: 0 8px;
  background: #1a1a1a;
  border: 1px solid #111;
`;

const SearchInput = styled.input`
  flex: 1;
  min-width: 0;
  font-size: 9px;
  line-height: 14px;
  &::placeholder {
    color: #aaa;
    opacity: 1;
  }
`;

const Sheet = styled.div`
  display: flex;
  align-items: center;
  gap: 7px;
  padding: 14px 6px 9px;
  font-size: 9px;
  svg + svg { margin-right: 2px; }
`;

const FieldList = styled.div`
  display: flex;
  flex-direction: column;
  gap: 2px;
  padding: 0 5px 0 4px;
`;

const FieldRow = styled.label`
  display: flex;
  align-items: center;
  height: 15px;
  padding-left: 21px;
  border-radius: 1px;
  background: #666;
  font-size: 9px;
`;

const Tick = styled.input`
  appearance: none;
  width: 10px;
  height: 10px;
  background: #fff;
  border: 1px solid #999;
`;

const Sigma = styled.span`
  width: 15px;
  padding-left: 3px;
  color: #bbb;
`;

const Watermark = styled.div`
  position: absolute;
  right: 39px;
  bottom: 9px;
  font-size: 11px;
  line-height: 14px;
  color: rgba(255, 255, 255, 0.4);
  pointer-events: none;
`;

const WatermarkTitle = styled.div`
  font-size: 14px;
  line-height: 19px;
`;

const StatusBar = styled.footer`
  display: flex;
  align-items: center;
  justify-content: space-between;
  height: 16px;
  padding: 0 4px;
  background: #333;
  color: #fff;
`;

const UpdateLink = styled.a`
  color: inherit;
  text-decoration: none;
`;

const Desktop = styled.div`
  height: 30px;
  border: solid #111;
  border-width: 0 14px 0 2px;
`;
